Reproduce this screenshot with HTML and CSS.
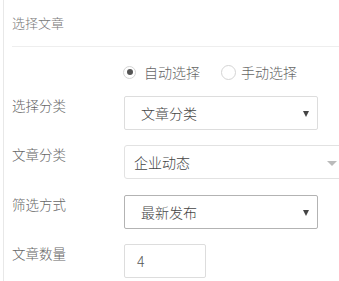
FILE: index.html
```html
<!DOCTYPE html>
<html lang="zh-CN">
<head>
<meta charset="utf-8">
<title>选择文章</title>
<link rel="stylesheet" href="styles.css">
</head>
<body>
<div class="panel">
  <div class="head">选择文章</div>
  <div class="radios">
    <span class="radio checked"><span class="dot"></span></span><span class="rlabel">自动选择</span>
    <span class="radio second"></span><span class="rlabel">手动选择</span>
  </div>
  <div class="row r1">
    <div class="label">选择分类</div>
    <div class="select s1"><span class="val">文章分类</span><span class="arrow"></span></div>
  </div>
  <div class="row r2">
    <div class="label">文章分类</div>
    <div class="select s2"><span class="val">企业动态</span><span class="arrow"></span></div>
  </div>
  <div class="row r3">
    <div class="label">筛选方式</div>
    <div class="select s3"><span class="val">最新发布</span><span class="arrow"></span></div>
  </div>
  <div class="row r4">
    <div class="label">文章数量</div>
    <div class="input">4</div>
  </div>
</div>
</body>
</html>
```
FILE: styles.css
```css
html, body {
  margin: 0;
  padding: 0;
  background: #fff;
  overflow: hidden;
}
body {
  font-family: "Noto Sans CJK SC", "Noto Sans", sans-serif;
  font-weight: 300;
  color: #555;
  width: 339px;
  height: 281px;
}
.panel {
  margin-left: 3px;
  border-left: 1px solid #e8e8e8;
  padding-left: 8px;
  height: 281px;
  box-sizing: border-box;
}
.head {
  height: 46px;
  line-height: 46px;
  font-size: 13px;
  color: #777;
  border-bottom: 1px solid #eee;
}
.radios {
  display: flex;
  align-items: center;
  height: 20px;
  margin-top: 15px;
  padding-left: 111px;
  font-size: 14px;
  color: #666;
}
.radio {
  width: 13px;
  height: 13px;
  box-sizing: border-box;
  border: 1px solid #d4d4d4;
  border-radius: 50%;
  display: flex;
  align-items: center;
  justify-content: center;
}
.radio .dot {
  width: 6px;
  height: 6px;
  border-radius: 50%;
  background: #555;
}
.radio.second {
  margin-left: 21px;
  width: 15px;
  height: 15px;
}
.rlabel {
  margin-left: 8px;
  line-height: 20px;
}
.radio.second + .rlabel {
  margin-left: 5px;
}
.row {
  display: flex;
  align-items: flex-start;
}
.r1 { margin-top: 14px; }
.r2 { margin-top: 15px; }
.r3 { margin-top: 16px; }
.r4 { margin-top: 15px; }
.label {
  width: 112px;
  flex: none;
  font-size: 13.5px;
  line-height: 18px;
  color: #666;
}
.select, .input {
  height: 34px;
  box-sizing: border-box;
  border: 1px solid #ddd;
  border-radius: 2px;
  display: flex;
  align-items: center;
  font-size: 14px;
  color: #444;
  flex: none;
  position: relative;
}
.s1, .s3 {
  width: 194px;
  padding-left: 16px;
}
.s3 {
  border-color: #b3b3b3;
}
.s2 {
  width: 226px;
  padding-left: 9px;
  border-color: #e2e2e2;
  border-radius: 3px;
}
.arrow {
  position: absolute;
  top: 14px;
  width: 0;
  height: 0;
}
.s1 .arrow, .s3 .arrow {
  right: 8px;
  border-left: 3px solid transparent;
  border-right: 3px solid transparent;
  border-top: 6px solid #444;
}
.s2 .arrow {
  right: 12px;
  top: 15px;
  border-left: 5px solid transparent;
  border-right: 5px solid transparent;
  border-top: 5px solid #bbb;
}
.input {
  width: 82px;
  padding-left: 12px;
  color: #555;
}
```
